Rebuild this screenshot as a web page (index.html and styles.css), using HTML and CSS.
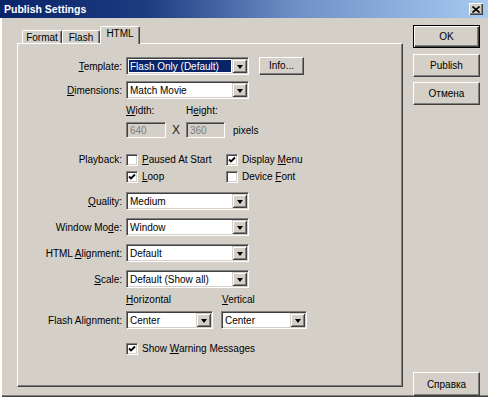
FILE: index.html
```html
<!DOCTYPE html>
<html>
<head>
<meta charset="utf-8">
<link rel="stylesheet" href="styles.css">
</head>
<body>
<div class="window">
  <div class="titlebar">
    <span class="title">Publish Settings</span>
    <span class="close"><svg width="8" height="7" viewBox="0 0 8 7"><path d="M0.5 0.5 L7.5 6.5 M7.5 0.5 L0.5 6.5" stroke="#000" stroke-width="1.6"/></svg></span>
  </div>
  <div class="client">
    <div class="leftcol">
      <div class="tabs">
        <div class="tab t-format">Format</div>
        <div class="tab t-flash">Flash</div>
        <div class="tab t-html sel">HTML</div>
      </div>
      <div class="panel">
        <div class="row r-tpl">
          <span class="lbl"><u>T</u>emplate:</span>
          <div class="combo w123"><span class="val hl">Flash Only (Default)</span><span class="drop"><i></i></span></div>
          <div class="btn info">Info...</div>
        </div>
        <div class="row r-dim">
          <span class="lbl"><u>D</u>imensions:</span>
          <div class="combo w123"><span class="val">Match Movie</span><span class="drop"><i></i></span></div>
        </div>
        <div class="row r-whl">
          <span class="lbl"></span>
          <span class="wl"><u>W</u>idth:</span>
          <span>H<u>e</u>ight:</span>
        </div>
        <div class="row r-whi">
          <span class="lbl"></span>
          <div class="field f1">640</div>
          <span class="times">X</span>
          <div class="field f2">360</div>
          <span class="px">pixels</span>
        </div>
        <div class="row r-play">
          <span class="lbl">Playback:</span>
          <div class="chk c1"><span class="box"></span><span><u>P</u>aused At Start</span></div>
          <div class="chk"><span class="box on"><svg width="8" height="8" viewBox="0 0 8 8"><path d="M1 3.5 L3 5.5 L7 1.5" fill="none" stroke="#000" stroke-width="1.8"/></svg></span><span>Display <u>M</u>enu</span></div>
        </div>
        <div class="row r-loop">
          <span class="lbl"></span>
          <div class="chk c1"><span class="box on"><svg width="8" height="8" viewBox="0 0 8 8"><path d="M1 3.5 L3 5.5 L7 1.5" fill="none" stroke="#000" stroke-width="1.8"/></svg></span><span><u>L</u>oop</span></div>
          <div class="chk"><span class="box"></span><span>Device <u>F</u>ont</span></div>
        </div>
        <div class="row r-sel r-q">
          <span class="lbl"><u>Q</u>uality:</span>
          <div class="combo w123"><span class="val">Medium</span><span class="drop"><i></i></span></div>
        </div>
        <div class="row r-sel">
          <span class="lbl">Window Mo<u>d</u>e:</span>
          <div class="combo w123"><span class="val">Window</span><span class="drop"><i></i></span></div>
        </div>
        <div class="row r-sel">
          <span class="lbl">HTML <u>A</u>lignment:</span>
          <div class="combo w123"><span class="val">Default</span><span class="drop"><i></i></span></div>
        </div>
        <div class="row r-sel">
          <span class="lbl"><u>S</u>cale:</span>
          <div class="combo w123"><span class="val">Default (Show all)</span><span class="drop"><i></i></span></div>
        </div>
        <div class="row r-hv">
          <span class="lbl"></span>
          <span class="hl1"><u>H</u>orizontal</span>
          <span><u>V</u>ertical</span>
        </div>
        <div class="row r-fa">
          <span class="lbl">Flash Alignment:</span>
          <div class="combo w87"><span class="val">Center</span><span class="drop"><i></i></span></div>
          <div class="combo w86 ml8"><span class="val">Center</span><span class="drop"><i></i></span></div>
        </div>
        <div class="row r-warn">
          <span class="lbl"></span>
          <div class="chk"><span class="box on"><svg width="8" height="8" viewBox="0 0 8 8"><path d="M1 3.5 L3 5.5 L7 1.5" fill="none" stroke="#000" stroke-width="1.8"/></svg></span><span>Show <u>W</u>arning Messages</span></div>
        </div>
      </div>
    </div>
    <div class="rightcol">
      <div class="btn big def">OK</div>
      <div class="btn big b-pub">Publish</div>
      <div class="btn big b-cancel">Отмена</div>
      <div class="btn big b-help">Справка</div>
    </div>
  </div>
</div>
</body>
</html>
```

FILE: styles.css
```css
html, body {
  margin: 0;
  padding: 0;
  background: #d4d0c8;
}
body {
  width: 488px;
  height: 397px;
  overflow: hidden;
  font-family: "Liberation Sans", Arial, sans-serif;
  font-size: 10px;
  color: #000;
}
u { text-decoration: underline; text-underline-offset: 1px; }
.window {
  width: 488px;
  height: 397px;
  box-sizing: border-box;
  background: #d4d0c8;
  display: flex;
  flex-direction: column;
  box-shadow: inset 2px 0 #ffffff, inset 0 -1px #404040, inset 0 -2px #808080;
}
.titlebar {
  height: 18px;
  flex: none;
  display: flex;
  align-items: center;
  justify-content: space-between;
  padding: 0 4px 0 4px;
  background: linear-gradient(to right, #0a246a 0%, #1c3c80 30%, #6d8fc6 60%, #a6caf0 100%);
}
.title {
  color: #fff;
  font-weight: bold;
  font-size: 10.5px;
}
.close {
  width: 14px;
  height: 12px;
  box-sizing: border-box;
  background: #d4d0c8;
  display: flex;
  align-items: center;
  justify-content: center;
  box-shadow: inset 1px 1px #fff, inset -1px -1px #404040, inset -2px -2px #808080;
  margin-right: 1px;
}
.client {
  flex: 1;
  display: flex;
  padding-left: 17px;
}
.leftcol {
  width: 386px;
  padding-top: 8px;
  display: flex;
  flex-direction: column;
}
.tabs {
  height: 17px;
  display: flex;
  align-items: flex-end;
  padding-left: 5px;
}
.tab {
  height: 13px;
  box-sizing: border-box;
  display: flex;
  align-items: center;
  justify-content: center;
  border-top: 1px solid #fff;
  border-left: 1px solid #fff;
  border-right: 1px solid #404040;
  box-shadow: inset -1px 0 #808080;
  border-radius: 2px 2px 0 0;
  padding-bottom: 0;
}
.t-format { width: 40px; }
.t-flash { width: 38px; }
.t-html {
  width: 40px;
  height: 18px;
  margin-bottom: -1px;
  z-index: 1;
  background: #d4d0c8;
  padding-bottom: 4px;
}
.panel {
  height: 344px;
  box-sizing: border-box;
  border-top: 1px solid #fff;
  border-left: 1px solid #fff;
  border-right: 1px solid #404040;
  border-bottom: 1px solid #404040;
  box-shadow: inset -1px -1px #808080;
  display: flex;
  flex-direction: column;
}
.row {
  display: flex;
  align-items: center;
  flex: none;
  height: 18px;
  white-space: nowrap;
}
.lbl {
  width: 104px;
  margin-right: 4px;
  text-align: right;
  flex: none;
}
.r-tpl { margin-top: 13px; }
.r-dim { margin-top: 6px; }
.r-whl { margin-top: 5px; height: 13px; }
.r-whi { margin-top: 5px; height: 16px; }
.r-play { margin-top: 15px; height: 13px; }
.r-loop { margin-top: 4px; height: 13px; }
.r-sel { margin-top: 8px; }
.r-q { margin-top: 9px; }
.r-hv { margin-top: 5px; height: 13px; }
.r-fa { margin-top: 5px; }
.r-warn { margin-top: 13px; height: 13px; }

.combo {
  height: 18px;
  box-sizing: border-box;
  background: #fff;
  border: 1px solid;
  border-color: #808080 #fff #fff #808080;
  box-shadow: inset 1px 1px #404040, inset -1px -1px #d4d0c8;
  padding: 1px;
  display: flex;
  align-items: stretch;
}
.w123 { width: 123px; }
.w87 { width: 87px; }
.w86 { width: 86px; }
.ml8 { margin-left: 8px; }
.val {
  flex: 1;
  display: flex;
  align-items: center;
  padding-left: 2px;
  overflow: hidden;
}
.val.hl {
  background: #0a246a;
  color: #fff;
  margin: 1px 1px 1px 1px;
  padding-left: 1px;
}
.drop {
  width: 15px;
  flex: none;
  box-sizing: border-box;
  background: #d4d0c8;
  box-shadow: inset 1px 1px #d4d0c8, inset -1px -1px #404040, inset 2px 2px #fff, inset -2px -2px #808080;
  display: flex;
  align-items: center;
  justify-content: center;
}
.drop i {
  width: 0;
  height: 0;
  border-left: 3.5px solid transparent;
  border-right: 3.5px solid transparent;
  border-top: 4px solid #000;
  margin-top: 1px;
}
.btn {
  box-sizing: border-box;
  background: #d4d0c8;
  border: 1px solid;
  border-color: #fff #404040 #404040 #fff;
  box-shadow: inset -1px -1px #808080;
  display: flex;
  align-items: center;
  justify-content: center;
}
.info {
  width: 45px;
  height: 18px;
  margin-left: 10px;
  margin-top: -1px;
}
.wl { width: 60px; }
.field {
  height: 16px;
  box-sizing: border-box;
  border: 1px solid;
  border-color: #808080 #fff #fff #808080;
  box-shadow: inset 1px 1px #404040, inset -1px -1px #d4d0c8;
  color: #808080;
  padding-left: 3px;
  display: flex;
  align-items: center;
}
.f1 { width: 40px; }
.f2 { width: 39px; }
.times {
  width: 20px;
  text-align: center;
  font-size: 12px;
  color: #222;
}
.px { margin-left: 8px; }
.chk {
  display: flex;
  align-items: center;
  gap: 4px;
}
.c1 { width: 100px; }
.box {
  width: 12px;
  height: 12px;
  box-sizing: border-box;
  background: #fff;
  border: 1px solid;
  border-color: #808080 #fff #fff #808080;
  box-shadow: inset 1px 1px #404040, inset -1px -1px #d4d0c8;
  display: flex;
  align-items: center;
  justify-content: center;
  flex: none;
}
.hl1 { width: 96px; }
.rightcol {
  width: 67px;
  margin-left: 10px;
  padding-top: 7px;
  display: flex;
  flex-direction: column;
}
.big { height: 23px; flex: none; }
.def {
  border: 1px solid #000;
  box-shadow: inset 1px 1px #fff, inset -1px -1px #404040, inset -2px -2px #808080;
}
.b-pub { margin-top: 6px; }
.b-cancel { margin-top: 5px; }
.b-help { margin-top: auto; height: 24px; margin-bottom: 1px; }
```
